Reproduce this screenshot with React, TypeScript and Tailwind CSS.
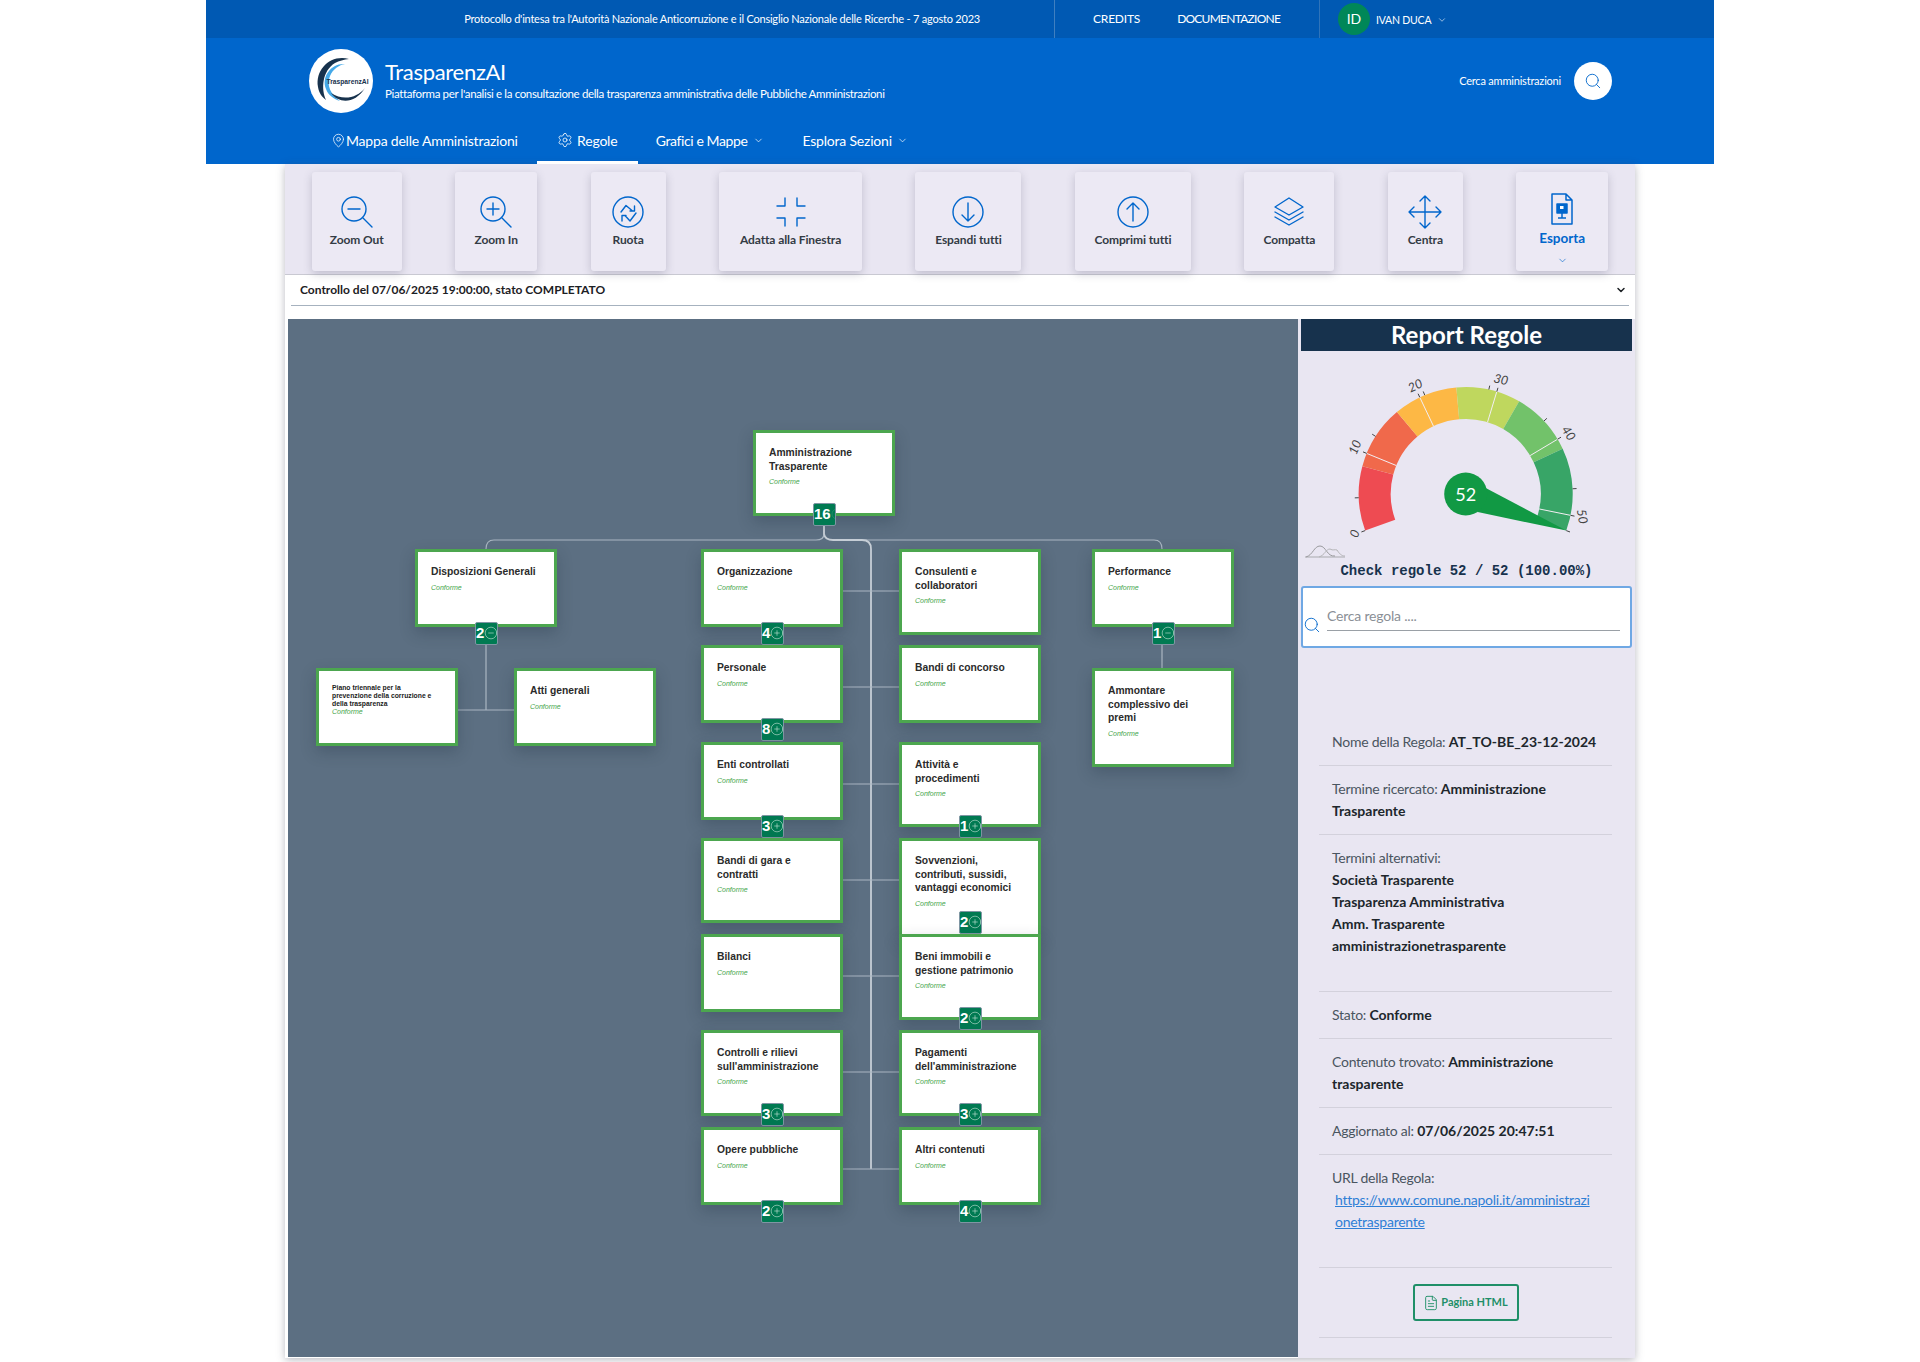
import React from "react";
import { MapPin, Settings, ChevronDown, Search, CirclePlus, CircleMinus, FileText } from "lucide-react";

const BLUE = "#0066cc";

function Ico({ children }: { children: React.ReactNode }) {
  return (
    <svg width="36" height="34" viewBox="0 0 36 34" fill="none" stroke={BLUE} strokeWidth="1.4" strokeLinecap="round" strokeLinejoin="round">
      {children}
    </svg>
  );
}

const tools: { label: string; w: string; icon: React.ReactNode }[] = [
  { label: "Zoom Out", w: "w-[90px]", icon: <Ico><circle cx="15" cy="14" r="12" /><path d="M9 14h12M24 23l9 9" /></Ico> },
  { label: "Zoom In", w: "w-[82px]", icon: <Ico><circle cx="15" cy="14" r="12" /><path d="M9 14h12M15 8v12M24 23l9 9" /></Ico> },
  { label: "Ruota", w: "w-[75px]", icon: <Ico><circle cx="18" cy="17" r="15" /><path d="M11 17L16 10.5L22 15.5M24.5 11V16H20M26 18L20 26L15 20.5M12 26V20.5H16" /></Ico> },
  { label: "Adatta alla Finestra", w: "w-[143px]", icon: <Ico><path d="M12 3v8H4M24 3v8h8M12 31v-8H4M24 31v-8h8" /></Ico> },
  { label: "Espandi tutti", w: "w-[106px]", icon: <Ico><circle cx="18" cy="17" r="15" /><path d="M18 8v18M12 20l6 6 6-6" /></Ico> },
  { label: "Comprimi tutti", w: "w-[116px]", icon: <Ico><circle cx="18" cy="17" r="15" /><path d="M18 26V8M12 14l6-6 6 6" /></Ico> },
  { label: "Compatta", w: "w-[90px]", icon: <Ico><path d="M18 3L32 12 18 20 4 12zM4 17l14 8 14-8M4 22l14 8 14-8" /></Ico> },
  { label: "Centra", w: "w-[75px]", icon: <Ico><path d="M18 1v32M2 17h32M13 6l5-5 5 5M13 28l5 5 5-5M7 12l-5 5 5 5M29 12l5 5-5 5" /></Ico> },
];

const rows = [549, 645, 742, 838, 934, 1030, 1127];
const colA = 701;
const colB = 899;
const colC = 1092;

type N = { t: string[]; x: number; y: number; h: number; badge?: string; minus?: boolean; small?: boolean };

const nodes: N[] = [
  { t: ["Amministrazione", "Trasparente"], x: 753, y: 430, h: 86, badge: "16" },
  { t: ["Disposizioni Generali"], x: 415, y: 549, h: 78, badge: "2", minus: true },
  { t: ["Piano triennale per la", "prevenzione della corruzione e", "della trasparenza"], x: 316, y: 668, h: 78, small: true },
  { t: ["Atti generali"], x: 514, y: 668, h: 78 },
  { t: ["Organizzazione"], x: colA, y: rows[0], h: 78, badge: "4" },
  { t: ["Personale"], x: colA, y: rows[1], h: 78, badge: "8" },
  { t: ["Enti controllati"], x: colA, y: rows[2], h: 78, badge: "3" },
  { t: ["Bandi di gara e", "contratti"], x: colA, y: rows[3], h: 85 },
  { t: ["Bilanci"], x: colA, y: rows[4], h: 78 },
  { t: ["Controlli e rilievi", "sull'amministrazione"], x: colA, y: rows[5], h: 86, badge: "3" },
  { t: ["Opere pubbliche"], x: colA, y: rows[6], h: 78, badge: "2" },
  { t: ["Consulenti e", "collaboratori"], x: colB, y: rows[0], h: 86 },
  { t: ["Bandi di concorso"], x: colB, y: rows[1], h: 78 },
  { t: ["Attività e", "procedimenti"], x: colB, y: rows[2], h: 85, badge: "1" },
  { t: ["Sovvenzioni,", "contributi, sussidi,", "vantaggi economici"], x: colB, y: rows[3], h: 100, badge: "2" },
  { t: ["Beni immobili e", "gestione patrimonio"], x: colB, y: rows[4], h: 86, badge: "2" },
  { t: ["Pagamenti", "dell'amministrazione"], x: colB, y: rows[5], h: 86, badge: "3" },
  { t: ["Altri contenuti"], x: colB, y: rows[6], h: 78, badge: "4" },
  { t: ["Performance"], x: colC, y: 549, h: 78, badge: "1", minus: true },
  { t: ["Ammontare", "complessivo dei", "premi"], x: colC, y: 668, h: 99 },
];

const OX = 288;
const OY = 319;

function Node({ n }: { n: N }) {
  return (
    <>
      <div
        className="absolute w-[142px] border-[3px] border-[#4ca64f] bg-white pl-[13px] pt-[13px] shadow-[0_6px_14px_rgba(30,45,60,0.28)]"
        style={{ left: n.x - OX, top: n.y - OY, height: n.h }}
      >
        {n.t.map((l) =>
          n.small ? (
            <div key={l} className="whitespace-nowrap text-[6.8px] font-bold leading-[8px] text-[#222]">{l}</div>
          ) : (
            <div key={l} className="whitespace-nowrap text-[10.3px] font-bold leading-[13.5px] text-[#2b2b2b]">{l}</div>
          )
        )}
        <div className={n.small ? "text-[7px] italic leading-[8px] text-[#46a64a]" : "mt-[4px] text-[7px] italic leading-[10px] text-[#46a64a]"}>Conforme</div>
      </div>
      {n.badge && (
        <div
          className="absolute flex h-[23px] w-[23px] items-center overflow-hidden rounded-[2px] border border-[#7f96a3] bg-[#007a52] text-[15px] font-bold text-white"
          style={{ left: n.x + 60 - OX, top: n.y + 73 - OY }}
        >
          <span className="mb-[2px] leading-none">{n.badge}</span>
          {n.badge === "16" ? (
            <CirclePlus size={12} strokeWidth={1} className="mb-[2px] shrink-0 text-[#3c9a78]" />
          ) : n.minus ? (
            <CircleMinus size={14} strokeWidth={1} className="mb-[2px] shrink-0 text-[#cfe8dc]" />
          ) : (
            <CirclePlus size={14} strokeWidth={1} className="mb-[2px] shrink-0 text-[#cfe8dc]" />
          )}
        </div>
      )}
    </>
  );
}

function Connectors() {
  const x = (v: number) => v - OX;
  const y = (v: number) => v - OY;
  const hLines = [591, 687, 784, 880, 976, 1072, 1169];
  return (
    <svg className="absolute left-0 top-0" width="1010" height="1038" fill="none" stroke="#aab6c2">
      <path strokeWidth="1.2" d={`M${x(824)} ${y(526)} V${y(534)} Q${x(824)} ${y(540)} ${x(816)} ${y(540)} H${x(494)} Q${x(486)} ${y(540)} ${x(486)} ${y(549)}`} />
      <path strokeWidth="1.2" d={`M${x(860)} ${y(540)} H${x(1154)} Q${x(1162)} ${y(540)} ${x(1162)} ${y(549)}`} />
      <path strokeWidth="1.8" stroke="#c6ced6" d={`M${x(824)} ${y(526)} V${y(534)} Q${x(825)} ${y(540)} ${x(833)} ${y(540)} H${x(862)} Q${x(871)} ${y(540)} ${x(871)} ${y(549)} V${y(1169)}`} />
      {hLines.map((h) => (
        <path key={h} strokeWidth="1.2" d={`M${x(842)} ${y(h)} H${x(899)}`} />
      ))}
      <path strokeWidth="1.2" d={`M${x(486)} ${y(645)} V${y(710)} M${x(458)} ${y(710)} H${x(514)} M${x(1162)} ${y(645)} V${y(668)}`} />
    </svg>
  );
}

const CX = 164.7;
const CY = 143;
const pt = (a: number, r: number) => {
  const t = (a * Math.PI) / 180;
  return [CX + r * Math.cos(t), CY - r * Math.sin(t)];
};
const sector = (a: number, b: number, R: number, r: number) => {
  const [x1, y1] = pt(a, R);
  const [x2, y2] = pt(b, R);
  const [x3, y3] = pt(b, r);
  const [x4, y4] = pt(a, r);
  return `M${x1} ${y1} A${R} ${R} 0 0 1 ${x2} ${y2} L${x3} ${y3} A${r} ${r} 0 0 0 ${x4} ${y4} Z`;
};

function Gauge() {
  const segs: [number, number, string][] = [
    [200, 165, "#ee4b52"],
    [165, 130, "#f0694b"],
    [130, 95, "#fdb845"],
    [95, 60, "#bfd75e"],
    [60, 25, "#72c26a"],
    [25, -20, "#38a567"],
  ];
  const majors = [200, 157.7, 115.4, 73.1, 30.8, -11.5];
  const minors = [182, 147.4, 112.5, 77.5, 43, 2.8, -20];
  const labels: [string, number, number, number][] = [
    ["0", 54.7, 183, -70],
    ["10", 55, 96.7, -68],
    ["20", 114.7, 35.7, -25],
    ["30", 199.7, 29.7, 12],
    ["40", 266.7, 83, 55],
    ["50", 280, 165.7, 80],
  ];
  return (
    <svg width="331" height="210" className="block">
      {segs.map(([a, b, c]) => (
        <path key={c} d={sector(a, b, 107, 75)} fill={c} />
      ))}
      {majors.slice(1).map((a) => {
        const [p, q] = pt(a, 75);
        const [r, s] = pt(a, 107);
        return <line key={a} x1={p} y1={q} x2={r} y2={s} stroke="#f3eef3" strokeWidth="1" />;
      })}
      {[...majors, ...minors].map((a, i) => {
        const [p, q] = pt(a, 107);
        const [r, s] = pt(a, 111);
        return <line key={i} x1={p} y1={q} x2={r} y2={s} stroke="#444" strokeWidth="1" />;
      })}
      {labels.map(([t, x, y, rot]) => (
        <text key={t} x={x} y={y} fontSize="12.5" fill="#444" fontStyle="italic" textAnchor="middle" dominantBaseline="middle" transform={`rotate(${rot} ${x} ${y})`}>
          {t}
        </text>
      ))}
      <path d={`M${CX + 20} ${CY - 6} L${pt(-20, 107)[0]} ${pt(-20, 107)[1]} L${CX + 12} ${CY + 18} Z`} fill="#119944" />
      <circle cx={CX} cy={CY} r="21.5" fill="#119944" />
      <text x={CX} y={CY + 2} fontSize="18" fill="#fff" textAnchor="middle" dominantBaseline="middle">52</text>
      <path d="M4 206 H44" stroke="#a9a9ad" strokeWidth="1.2" fill="none" />
      <path d="M5 206 C12 204 13 195 19 195 C25 195 26 206 34 205" stroke="#9a9a9e" strokeWidth="1" fill="none" />
      <path d="M18 206 C24 204 25 198 29 198 C32 200 34 198 36 199 C38 202 40 205 44 205" stroke="#b5b5b8" strokeWidth="1" fill="none" />
    </svg>
  );
}

function Row({ children, bottom }: { children: React.ReactNode; bottom?: boolean }) {
  return (
    <div className={`border-b border-[#d3d1dc] pl-[13px] pt-3 text-[14px] leading-[22px] tracking-[-0.25px] text-[#4a5560] ${bottom ? "pb-[34px]" : "pb-3"}`}>
      {children}
    </div>
  );
}
const B = ({ children }: { children: React.ReactNode }) => <b className="font-bold tracking-normal text-[#20262c]">{children}</b>;

function Logo() {
  return (
    <svg width="64" height="64" viewBox="0 0 64 64" className="shrink-0">
      <circle cx="32" cy="32" r="32" fill="#fff" />
      <path d="M40 10 C22 5 6 20 9 38 C10 44 13 48 17 51 C12 40 13 22 26 14 C30 12 35 10.5 40 10Z" fill="#17324d" />
      <path d="M36 15 C22 14 12 28 17 40 C19 46 25 50 31 52 C22 46 17 36 21 27 C24 20 30 16 36 15Z" fill="#45a9e8" />
      <path d="M22 44 C30 55 46 55 56 39 C48 49 34 52 22 44Z" fill="#17324d" />
      <text x="38.5" y="34.5" fontSize="6.7" fontWeight="700" fill="#17324d" textAnchor="middle" fontFamily="'Liberation Sans',sans-serif">TrasparenzAI</text>
    </svg>
  );
}

export default function App() {
  return (
    <div className="h-[1362px] w-[1920px] overflow-hidden bg-white font-['Lato',sans-serif]">
      <header className="ml-[206px] h-[164px] w-[1508px] bg-[#0066cc] text-white">
        <div className="flex h-[38px] bg-[#0059b3]">
          <div className="flex w-[848px] items-center justify-end pr-[74px] pt-[1px] text-[11px] tracking-[-0.21px]">
            Protocollo d'intesa tra l'Autorità Nazionale Anticorruzione e il Consiglio Nazionale delle Ricerche - 7 agosto 2023
          </div>
          <div className="flex w-[265px] items-center border-l border-[#3f7fc0] pb-[1px] pl-[38px] text-[12px] tracking-[-0.2px]">
            <span>CREDITS</span>
            <span className="ml-[37px] tracking-[-0.75px]">DOCUMENTAZIONE</span>
          </div>
          <div className="flex items-center border-l border-[#2f74ba] pl-[18px]">
            <div className="mb-[1px] flex h-[32px] w-[32px] items-center justify-center rounded-full bg-[#008758] text-[14px]">ID</div>
            <span className="ml-[6px] mt-[3px] text-[10.5px] tracking-[-0.2px]">IVAN DUCA</span>
            <ChevronDown size={10} strokeWidth={1.4} className="ml-[6px] mt-[2px]" />
          </div>
        </div>
        <div className="flex h-[92px] items-start pl-[103px] pt-[11px]">
          <Logo />
          <div className="ml-[12px] mt-[9px]">
            <div className="text-[22px] leading-[28px] tracking-[-0.3px]">TrasparenzAI</div>
            <div className="mt-[1px] whitespace-nowrap text-[11.5px] leading-[14px] tracking-[-0.35px]">
              Piattaforma per l'analisi e la consultazione della trasparenza amministrativa delle Pubbliche Amministrazioni
            </div>
          </div>
          <div className="ml-auto mr-[102px] mt-[13px] flex items-center">
            <span className="text-[11px] tracking-[-0.2px]">Cerca amministrazioni</span>
            <div className="ml-[13px] flex h-[38px] w-[38px] items-center justify-center rounded-full bg-white text-[#0066cc]">
              <Search size={18} strokeWidth={1.2} />
            </div>
          </div>
        </div>
        <nav className="flex h-[34px] items-stretch pl-[125px] text-[14px]">
          <div className="flex items-center pb-[14px] tracking-[-0.2px]">
            <MapPin size={15} strokeWidth={1.2} />
            <span>Mappa delle Amministrazioni</span>
          </div>
          <div className="ml-[19px] flex w-[101px] items-center justify-center gap-[4px] border-b-[3px] border-white pb-[11px] tracking-[-0.2px]">
            <Settings size={16} strokeWidth={1.2} />
            <span>Regole</span>
          </div>
          <div className="ml-[18px] flex items-center pb-[14px] tracking-[-0.4px]">
            <span>Grafici e Mappe</span>
            <ChevronDown size={11} strokeWidth={1.5} className="ml-[6px]" />
          </div>
          <div className="ml-[38px] flex items-center pb-[14px] tracking-[-0.2px]">
            <span>Esplora Sezioni</span>
            <ChevronDown size={11} strokeWidth={1.5} className="ml-[5px]" />
          </div>
        </nav>
      </header>

      <main className="ml-[285px] h-[1194px] w-[1350px] bg-white shadow-[0_2px_8px_rgba(60,60,80,0.35)]">
        <div className="flex h-[111px] items-start justify-around border-b border-[#c9c9d2] bg-[#e9e6f2] pt-[8px]">
          {tools.map((t) => (
            <div key={t.label} className={`${t.w} flex h-[99px] flex-col items-center rounded-[3px] bg-[#ece9f4] pt-[23px] shadow-[0_3px_8px_rgba(70,70,100,0.25)]`}>
              <div className="flex h-[34px] items-center">{t.icon}</div>
              <span className="mt-[3px] whitespace-nowrap text-[12px] font-bold leading-[16px] tracking-[-0.1px] text-[#333b44]">{t.label}</span>
            </div>
          ))}
          <div className="flex h-[99px] w-[92px] flex-col items-center rounded-[3px] bg-[#ece9f4] pt-[20px] shadow-[0_3px_8px_rgba(70,70,100,0.25)]">
            <svg width="24" height="34" viewBox="0 0 24 34" fill="none" stroke={BLUE} strokeWidth="1.5" strokeLinejoin="round">
              <path d="M2 2h14l6 6v24H2z M16 2v6h6" />
              <path d="M7 12h10v9H7z" fill={BLUE} />
              <path d="M12 21v5M8 26h8" />
              <path d="M10 14h3.5v3H10z" fill="#fff" stroke="none" />
            </svg>
            <span className="mt-[3px] text-[13.5px] font-bold leading-[18px] text-[#0066cc]">Esporta</span>
            <ChevronDown size={11} strokeWidth={1.4} className="mt-[8px] text-[#0066cc]" />
          </div>
        </div>

        <div className="mx-[6px] flex h-[31px] items-center justify-between border-b-[1.5px] border-[#a6b2bf] pl-[9px] pr-[2px] text-[12px] font-bold text-[#1c2024]">
          <span>Controllo del 07/06/2025 19:00:00, stato COMPLETATO</span>
          <ChevronDown size={12} strokeWidth={3} />
        </div>

        <div className="mt-[13px] flex h-[1039px] pl-[3px]">
          <section className="relative h-[1038px] w-[1010px] bg-[#5c6f82] font-['Liberation_Sans',sans-serif]">
            <Connectors />
            {nodes.map((n) => (
              <Node key={n.t[0]} n={n} />
            ))}
          </section>
          <aside className="h-[1039px] w-[337px] bg-[#e9e6f2] px-[3px]">
            <h2 className="flex h-[32px] items-center justify-center bg-[#17324d] text-[24px] font-bold text-white">Report Regole</h2>
            <Gauge />
            <div className="text-center font-['Liberation_Mono',monospace] text-[14px] font-bold leading-[20px] text-[#17324d]">
              Check regole 52 / 52 (100.00%)
            </div>
            <div className="mt-[5px] flex h-[62px] w-[331px] items-end rounded-[3px] border-2 border-[#6fa8e4] bg-white pb-[15px] pr-[10px]">
              <Search size={18} strokeWidth={1.2} className="mb-[-3px] shrink-0 text-[#0066cc]" />
              <div className="ml-[6px] flex-1 border-b border-[#9aa0a6] pb-[4px] text-[14px] leading-[20px] tracking-[-0.2px] text-[#8a8f96]">Cerca regola ....</div>
            </div>
            <div className="ml-[18px] mt-[71px] w-[293px]">
              <Row>Nome della Regola: <B>AT_TO-BE_23-12-2024</B></Row>
              <Row>Termine ricercato: <B>Amministrazione<br />Trasparente</B></Row>
              <Row bottom>
                Termini alternativi:<br />
                <B>Società Trasparente<br />Trasparenza Amministrativa<br />Amm. Trasparente<br />amministrazionetrasparente</B>
              </Row>
              <Row>Stato: <B>Conforme</B></Row>
              <Row>Contenuto trovato: <B>Amministrazione<br />trasparente</B></Row>
              <Row>Aggiornato al: <B>07/06/2025 20:47:51</B></Row>
              <Row bottom>
                URL della Regola:<br />
                <a className="ml-[3px] block text-[#2f7fd6] underline">https://www.comune.napoli.it/amministrazi<br />onetrasparente</a>
              </Row>
              <div className="flex justify-center border-b border-[#d3d1dc] py-4">
                <div className="flex h-[37px] w-[106px] items-center justify-center gap-[2px] rounded-[3px] border-2 border-[#1f8f68] text-[11px] font-bold text-[#1f8f68]">
                  <FileText size={16} strokeWidth={1.4} />
                  Pagina HTML
                </div>
              </div>
            </div>
          </aside>
        </div>
      </main>
    </div>
  );
}
